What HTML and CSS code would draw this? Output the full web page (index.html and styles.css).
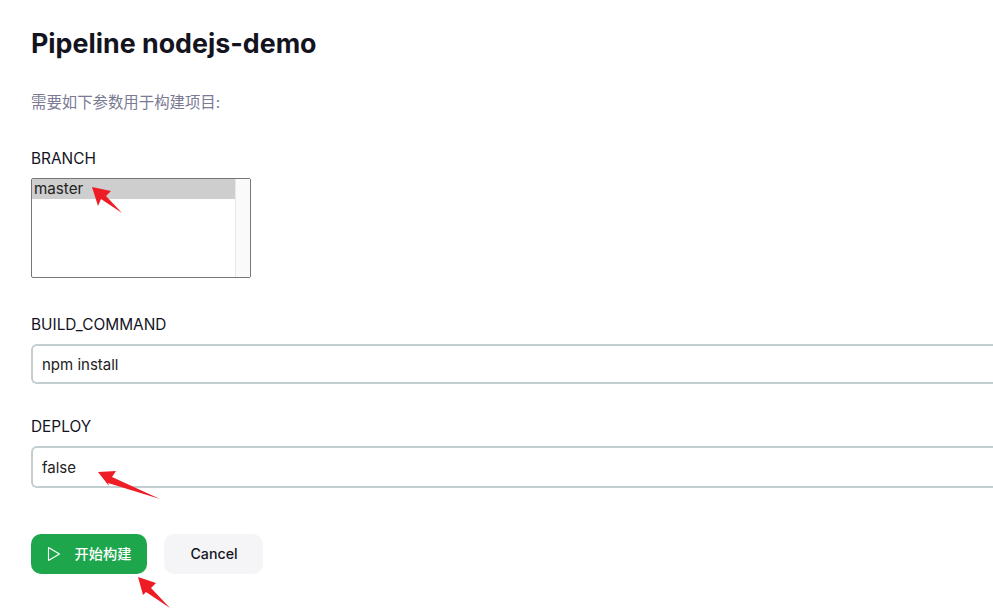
FILE: index.html
```html
<!DOCTYPE html>
<html lang="en">

<head>
    <meta charset="UTF-8">
    <meta name="viewport" content="width=device-width, initial-scale=1.0">
    <title>Pipeline nodejs-demo</title>
    <link rel="stylesheet" href="styles.css">
</head>

<body>
    <div class="page">
        <h1 class="title">Pipeline nodejs-demo</h1>
        <p class="desc">需要如下参数用于构建项目:</p>

        <div class="param param-branch">
            <div class="param-name">BRANCH</div>
            <div class="listbox">
                <div class="listbox-items">
                    <div class="listbox-item">master</div>
                </div>
                <div class="listbox-track"></div>
            </div>
        </div>

        <div class="param param-command">
            <div class="param-name">BUILD_COMMAND</div>
            <input class="text-input" type="text" value="npm install">
        </div>

        <div class="param param-deploy">
            <div class="param-name">DEPLOY</div>
            <input class="text-input text-input-tall" type="text" value="false">
        </div>

        <div class="actions">
            <button class="btn btn-build" type="button">
                <svg class="btn-icon" viewBox="0 0 14 16" width="14" height="16">
                    <path d="M1.5 1.5 L12.5 8 L1.5 14.5 Z" fill="none" stroke="#fff" stroke-width="1.1" stroke-linejoin="round" />
                </svg>
                <span class="btn-text">开始构建</span>
            </button>
            <button class="btn btn-cancel" type="button">Cancel</button>
        </div>
    </div>

    <!-- 红色箭头标注 -->
    <svg class="arrows" viewBox="0 0 993 613" width="993" height="613">
        <polygon points="92,187 111,191 106,196 122,213 101,199 98,206" />
        <polygon points="98,472 116,471 112,477 160,499 108,483 109,486" />
        <polygon points="138,577 156,583 151,588 170,608 146,592 143,595" />
    </svg>
</body>

</html>
```

FILE: styles.css
```css
* {
    margin: 0;
    padding: 0;
    box-sizing: border-box;
}

html,
body {
    height: 100%;
    overflow: hidden;
    background-color: #fff;
}

body {
    position: relative;
    font-family: Inter, "Noto Sans CJK SC", sans-serif;
    color: #14141f;
}

.page {
    padding: 26px 0 0 31px;
}

.title {
    font-size: 26.8px;
    line-height: 35px;
    font-weight: 700;
}

.desc {
    margin-top: 32px;
    font-size: 15.4px;
    line-height: 20px;
    color: #7a7a94;
}

.param-name {
    font-size: 15.4px;
    line-height: 22px;
}

.param-branch {
    margin-top: 35px;
}

.param-command {
    margin-top: 36px;
}

.param-deploy {
    margin-top: 32px;
}

.listbox {
    display: flex;
    width: 220px;
    height: 100px;
    margin-top: 8px;
    border: 1px solid #767676;
    border-radius: 2px;
}

.listbox-items {
    flex: 1;
}

.listbox-item {
    height: 20px;
    padding-left: 2px;
    font-size: 15.2px;
    line-height: 19px;
    background-color: #cecece;
    color: #222;
}

.listbox-track {
    width: 15px;
    background-color: #fafafa;
    border-left: 1px solid #e8e8e8;
}

/* 输入框右侧超出窗口，所以这里不画右边框 */
.text-input {
    display: block;
    width: 100%;
    height: 40px;
    margin-top: 8px;
    padding: 0 9px;
    border: 2px solid #c3ced1;
    border-right: none;
    border-radius: 6px 0 0 6px;
    font-family: inherit;
    font-size: 15px;
    color: #222;
    outline: none;
}

.text-input-tall {
    height: 42px;
}

.actions {
    display: flex;
    gap: 17px;
    margin-top: 46px;
}

.btn {
    display: flex;
    align-items: center;
    justify-content: center;
    height: 40px;
    padding-bottom: 1px;
    border: none;
    border-radius: 10px;
    font-family: inherit;
    font-size: 14.2px;
    font-weight: 500;
}

.btn-build {
    width: 116px;
    gap: 14px;
    background-color: #1ea64d;
    color: #fff;
}

.btn-text {
    padding-bottom: 2px;
}

.btn-icon {
    flex: none;
}

.btn-cancel {
    width: 99px;
    padding-left: 1px;
    background-color: #f5f5f8;
    color: #14141f;
}

.arrows {
    position: absolute;
    left: 0;
    top: 0;
    pointer-events: none;
}

.arrows polygon {
    fill: #ee1c25;
}
```
